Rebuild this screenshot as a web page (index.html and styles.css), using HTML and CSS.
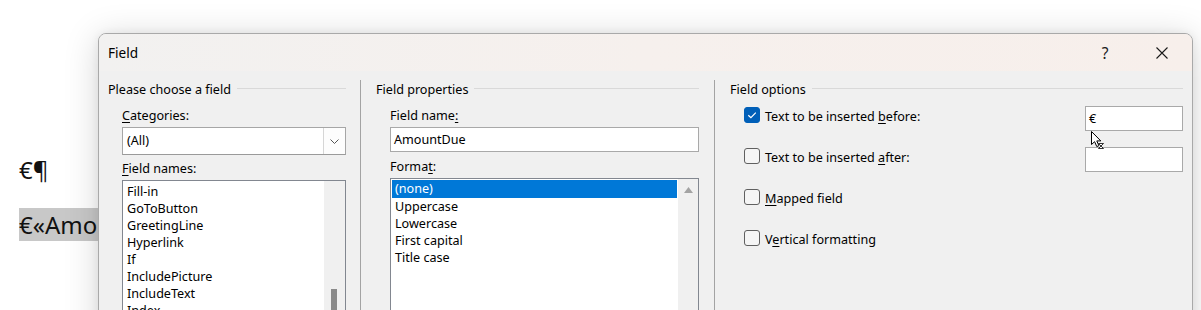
FILE: index.html
```html
<!DOCTYPE html>
<html lang="en">
<head>
<meta charset="utf-8">
<title>Field</title>
<link rel="stylesheet" href="styles.css">
</head>
<body>
<div class="doc">
  <p class="para">€¶</p>
  <p class="para"><span class="field-shade">€«AmountDue»</span></p>
</div>

<div class="dialog">
  <div class="titlebar">
    <span class="title">Field</span>
    <span class="tb-btn tb-help">?</span>
    <span class="tb-btn tb-close">
      <svg width="12" height="12" viewBox="0 0 12 12"><path d="M0.5 0.5 L11.5 11.5 M11.5 0.5 L0.5 11.5" stroke="#1a1a1a" stroke-width="1.1" fill="none"/></svg>
    </span>
  </div>

  <div class="dlg-body">
    <section class="panel panel-choose">
      <div class="group-head"><span>Please choose a field</span><i class="rule"></i></div>
      <div class="inner">
        <div class="lbl"><u>C</u>ategories:</div>
        <div class="select">
          <span class="select-val">(All)</span>
          <span class="select-btn"><svg width="9" height="5" viewBox="0 0 9 5"><path d="M0.5 0.5 L4.5 4.5 L8.5 0.5" stroke="#555" stroke-width="1" fill="none"/></svg></span>
        </div>
        <div class="lbl lbl-list"><u>F</u>ield names:</div>
        <div class="listbox">
          <ul class="items items-names">
            <li>Fill-in</li>
            <li>GoToButton</li>
            <li>GreetingLine</li>
            <li>Hyperlink</li>
            <li>If</li>
            <li>IncludePicture</li>
            <li>IncludeText</li>
            <li>Index</li>
          </ul>
          <div class="vscroll vscroll-names"><div class="thumb"></div></div>
        </div>
      </div>
    </section>

    <div class="vsep"></div>

    <section class="panel panel-props">
      <div class="group-head"><span>Field properties</span><i class="rule"></i></div>
      <div class="inner">
        <div class="lbl">Field name<u>:</u></div>
        <div class="textbox textbox-name">AmountDue</div>
        <div class="lbl lbl-format">Forma<u>t</u>:</div>
        <div class="listbox">
          <ul class="items items-format">
            <li class="sel">(none)</li>
            <li>Uppercase</li>
            <li>Lowercase</li>
            <li>First capital</li>
            <li>Title case</li>
          </ul>
          <div class="vscroll vscroll-format">
            <svg class="up-arrow" width="9" height="6" viewBox="0 0 9 6"><path d="M0 6 L4.5 0 L9 6 Z" fill="#a3a3a3"/></svg>
          </div>
        </div>
      </div>
    </section>

    <div class="vsep"></div>

    <section class="panel panel-options">
      <div class="group-head"><span>Field options</span><i class="rule"></i></div>
      <div class="inner options">
        <div class="opt">
          <span class="chk chk-on"><svg width="16" height="16" viewBox="0 0 16 16"><path d="M4.3 8.2 L6.9 10.7 L11.8 5.6" stroke="#fff" stroke-width="1.2" fill="none"/></svg></span>
          <span class="opt-lbl">Text to be inserted <u>b</u>efore:</span>
          <span class="textbox textbox-opt">€</span>
        </div>
        <div class="opt">
          <span class="chk"></span>
          <span class="opt-lbl">Text to be inserted <u>a</u>fter:</span>
          <span class="textbox textbox-opt"></span>
        </div>
        <div class="opt">
          <span class="chk"></span>
          <span class="opt-lbl"><u>M</u>apped field</span>
        </div>
        <div class="opt">
          <span class="chk"></span>
          <span class="opt-lbl">V<u>e</u>rtical formatting</span>
        </div>
      </div>
    </section>
  </div>
</div>

<svg class="cursor" width="14" height="18" viewBox="0 0 14 18">
  <path d="M0.5 0.5 L0.5 13.5 L3.6 10.7 L5.8 15.6 L7.9 14.7 L5.8 9.9 L9.8 9.9 Z" fill="#fff" stroke="#000" stroke-width="1"/>
  <path d="M7.5 12.5 L12.5 12.5 L10 15 Z M10 15 L7.5 17.5 L12.5 17.5 Z" fill="#fff" stroke="#000" stroke-width="0.8"/>
</svg>
</body>
</html>
```

FILE: styles.css
```css
html, body {
  margin: 0;
  padding: 0;
}

body {
  width: 1201px;
  height: 310px;
  overflow: hidden;
  position: relative;
  background: #ffffff;
  font-family: "Noto Sans", "Open Sans", sans-serif;
  color: #000;
}

/* ---------- document behind the dialog (visible part only) ---------- */
.doc {
  width: 79px;
  overflow: hidden;
  padding: 153px 0 0 19px;
  font-family: "Noto Sans", "Open Sans", sans-serif;
  font-size: 24px;
  color: #111;
}

.para {
  margin: 0 0 21px 0;
  line-height: 34px;
  height: 34px;
  white-space: nowrap;
}

.field-shade {
  display: inline-block;
  background: #c8c8c8;
  line-height: 33px;
}

/* ---------- dialog window ---------- */
.dialog {
  position: absolute;
  left: 98px;
  top: 33px;
  width: 1095px;
  height: 320px;
  box-sizing: border-box;
  border: 1px solid #a9a9a9;
  border-radius: 8px 8px 0 0;
  overflow: hidden;
  background: #f0f0f0;
  box-shadow: 0 4px 34px rgba(0, 0, 0, 0.17), 0 0 8px rgba(0, 0, 0, 0.06);
  font-size: 12.6px;
}

.titlebar {
  height: 37px;
  display: flex;
  align-items: center;
  padding-left: 9px;
  background: linear-gradient(to right, #f2f1f0 0%, #f6f0ed 50%, #f7efeb 100%);
}

.title {
  font-size: 13.6px;
  color: #000;
}

.tb-btn {
  width: 46px;
  height: 37px;
  display: flex;
  align-items: center;
  justify-content: center;
}

.tb-help {
  margin-left: auto;
  font-size: 15.5px;
  color: #1a1a1a;
}

.tb-close {
  margin-left: 11px;
  margin-right: 7px;
}

.dlg-body {
  display: flex;
  padding-left: 9px;
  height: 300px;
}

.panel {
  padding-top: 10px;
}

.panel-choose { width: 238px; }
.panel-props  { width: 323px; }
.panel-options { width: 453px; }

.vsep {
  width: 1px;
  margin-top: 9px;
  background: #a3a3a3;
}

.panel-choose + .vsep { margin-left: 14px; margin-right: 15px; }
.panel-props + .vsep { margin-left: 15px; margin-right: 15px; }

.group-head {
  display: flex;
  align-items: center;
  height: 17px;
  line-height: 17px;
  white-space: nowrap;
}

.rule {
  flex: 1;
  height: 1px;
  margin-left: 6px;
  margin-top: -2px;
  background: #d9d9d9;
}

.inner {
  padding-left: 14px;
}

.lbl {
  line-height: 17px;
  margin-top: 9px;
  white-space: nowrap;
}

.lbl-list { margin-top: 5px; }
.lbl-format { margin-top: 6px; }

u {
  text-decoration: underline;
  text-underline-offset: 2px;
  text-decoration-thickness: 1px;
}

/* dropdown */
.select {
  margin-top: 3px;
  height: 28px;
  box-sizing: border-box;
  border: 1px solid #a6a6a6;
  border-bottom-color: #9a9a9a;
  background: #fff;
  display: flex;
  align-items: stretch;
}

.select-val {
  flex: 1;
  padding-left: 4px;
  line-height: 26px;
}

.select-btn {
  width: 21px;
  border-left: 1px solid #d6d6d6;
  background: #fdfdfd;
  display: flex;
  align-items: center;
  justify-content: center;
}

/* list boxes */
.listbox {
  margin-top: 3px;
  height: 140px;
  box-sizing: border-box;
  border: 1px solid #828790;
  background: #fff;
  display: flex;
  overflow: hidden;
}

.items {
  list-style: none;
  margin: 0;
  flex: 1;
}

.items li {
  line-height: 17px;
  height: 17px;
  white-space: nowrap;
}

.items-names {
  padding: 2px 0 0 4px;
}

.items-format {
  padding: 1px 1px 0 1px;
}

.items-format li {
  padding-left: 3px;
}

.items-format li.sel {
  background: #0078d7;
  color: #fff;
  height: 18px;
  line-height: 18px;
}

.vscroll {
  background: #f0f0f0;
  display: flex;
  flex-direction: column;
}

.vscroll-names {
  width: 21px;
  padding-top: 108px;
  align-items: flex-start;
}

.thumb {
  margin-left: 7px;
  width: 6px;
  height: 40px;
  background: #8a8a8a;
}

.vscroll-format {
  width: 20px;
  align-items: center;
  padding-top: 8px;
}

/* text boxes */
.textbox {
  display: block;
  height: 25px;
  box-sizing: border-box;
  border: 1px solid #a9a9a9;
  background: #fff;
  line-height: 23px;
  padding-left: 3px;
  white-space: nowrap;
}

.textbox-name {
  margin-top: 3px;
}

/* options */
.options {
  padding-top: 8px;
}

.opt {
  display: flex;
  align-items: flex-start;
  min-height: 25px;
  margin-bottom: 16px;
}

.chk {
  width: 16px;
  height: 16px;
  margin-top: 1px;
  box-sizing: border-box;
  border: 1px solid #606060;
  border-radius: 3px;
  background: rgba(255, 255, 255, 0.35);
  display: flex;
}

.chk-on {
  border-color: #005fb8;
  background: #005fb8;
}

.chk-on svg {
  margin: -1px;
}

.opt-lbl {
  margin-left: 5px;
  line-height: 17px;
  margin-top: 2px;
  white-space: nowrap;
}

.textbox-opt {
  margin-left: auto;
  width: 98px;
}

/* mouse pointer over everything */
.cursor {
  position: absolute;
  left: 1091px;
  top: 131px;
}
```
